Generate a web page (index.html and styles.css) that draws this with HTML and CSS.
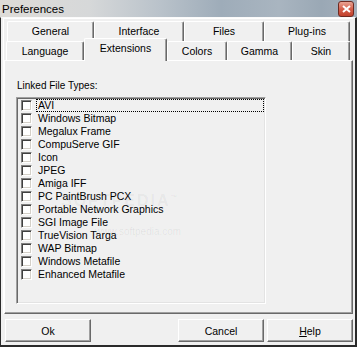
FILE: index.html
```html
<!DOCTYPE html>
<html lang="en">
  <head>
    <meta charset="UTF-8" />
    <title>Preferences</title>
    <link rel="stylesheet" href="styles.css">
  </head>
  <body>
    <div class="window">
      <div class="titlebar">
        <span class="title">Preferences</span>
        <div class="close-btn">
          <svg width="9" height="8" viewBox="0 0 9 8">
            <path d="M1 1 L8 7 M8 1 L1 7" stroke="#fff" stroke-width="2" />
          </svg>
        </div>
      </div>

      <div class="frame">
        <div class="sheet">
          <div class="tab-row back">
            <div class="tab" style="width: 87px">General</div>
            <div class="tab" style="width: 90px">Interface</div>
            <div class="tab" style="width: 80px">Files</div>
            <div class="tab" style="width: 86px">Plug-ins</div>
          </div>
          <div class="tab-row front">
            <div class="tab" style="width: 78px">Language</div>
            <div class="tab selected" style="width: 83px">Extensions</div>
            <div class="tab" style="width: 60px">Colors</div>
            <div class="tab" style="width: 65px">Gamma</div>
            <div class="tab" style="width: 58px">Skin</div>
          </div>

          <div class="panel">
            <div class="label">Linked File Types:</div>
            <div class="list">
              <div class="item focus"><span class="check"></span><span class="text">AVI</span></div>
              <div class="item"><span class="check"></span><span class="text">Windows Bitmap</span></div>
              <div class="item"><span class="check"></span><span class="text">Megalux Frame</span></div>
              <div class="item"><span class="check"></span><span class="text">CompuServe GIF</span></div>
              <div class="item"><span class="check"></span><span class="text">Icon</span></div>
              <div class="item"><span class="check"></span><span class="text">JPEG</span></div>
              <div class="item"><span class="check"></span><span class="text">Amiga IFF</span></div>
              <div class="item"><span class="check"></span><span class="text">PC PaintBrush PCX</span></div>
              <div class="item"><span class="check"></span><span class="text">Portable Network Graphics</span></div>
              <div class="item"><span class="check"></span><span class="text">SGI Image File</span></div>
              <div class="item"><span class="check"></span><span class="text">TrueVision Targa</span></div>
              <div class="item"><span class="check"></span><span class="text">WAP Bitmap</span></div>
              <div class="item"><span class="check"></span><span class="text">Windows Metafile</span></div>
              <div class="item"><span class="check"></span><span class="text">Enhanced Metafile</span></div>
            </div>
            <div class="watermark">SOFTPEDIA<sup>™</sup></div>
            <div class="watermark-url">www.softpedia.com</div>
          </div>
        </div>

        <div class="buttons">
          <button class="btn">Ok</button>
          <button class="btn cancel">Cancel</button>
          <button class="btn"><u>H</u>elp</button>
        </div>
      </div>
    </div>
  </body>
</html>
```

FILE: styles.css
```css
* {
  margin: 0;
  padding: 0;
  box-sizing: border-box;
  font-family: "Liberation Sans", Arial, sans-serif;
}
body {
  background-color: #f0f0f0;
  width: 357px;
  height: 347px;
  overflow: hidden;
}
.window {
  width: 357px;
  height: 347px;
  display: flex;
  flex-direction: column;
}
.titlebar {
  height: 17px;
  display: flex;
  align-items: center;
  justify-content: space-between;
  padding: 0 3px 0 2px;
  background: linear-gradient(90deg, #dedcd8 0%, #d6d8d9 25%, #b9c2ca 45%, #9eacb9 62%, #a9b5c0 78%, #9aa8b5 90%, #a4b0bc 100%);
}
.title {
  font-size: 11.5px;
  color: #000;
  padding-top: 1px;
}
.close-btn {
  width: 16px;
  height: 16px;
  margin-top: 1px;
  border: 1px solid #6e2a22;
  border-radius: 3px;
  background: linear-gradient(#e9a494, #d5604c 50%, #c2412c);
  display: flex;
  align-items: center;
  justify-content: center;
}
.frame {
  flex: 1;
  background-color: #f0f0f0;
  border-left: 1px solid #2a2a2a;
  border-right: 2px solid #2a2a2a;
  border-bottom: 2px solid #2a2a2a;
  border-top: 1px solid #fafafa;
  display: flex;
  flex-direction: column;
}
.sheet {
  margin: 0 2px 0 2px;
  border-left: 1px solid #fff;
  border-top: 1px solid #fff;
  padding-top: 2px;
  display: flex;
  flex-direction: column;
}
.tab-row {
  display: flex;
  height: 20px;
}
.tab-row.back {
  margin-left: 3px;
}
.tab-row.front {
  margin-left: 2px;
  height: 19px;
}
.tab {
  height: 20px;
  font-size: 10.5px;
  line-height: 19px;
  text-align: center;
  color: #000;
  background-color: #f0f0f0;
  border-top: 1px solid #fff;
  border-left: 1px solid #fff;
  border-right: 1px solid #696969;
  box-shadow: inset -1px 0 #a0a0a0;
  border-radius: 2px 2px 0 0;
}
.front .tab {
  height: 19px;
  line-height: 18px;
}
.front .tab.selected {
  height: 23px;
  margin-top: -3px;
  line-height: 19px;
  position: relative;
  z-index: 1;
}
.panel {
  height: 254px;
  position: relative;
  border-top: 1px solid #fff;
  border-left: 1px solid #fff;
  border-right: 1px solid #696969;
  border-bottom: 1px solid #696969;
  box-shadow: inset -1px -1px #a0a0a0;
  padding: 19px 0 0 11px;
}
.label {
  font-size: 10px;
  line-height: 12px;
  color: #000;
  margin-bottom: 5px;
  padding-left: 1px;
}
.list {
  width: 250px;
  height: 207px;
  border-top: 1px solid #a0a0a0;
  border-left: 1px solid #a0a0a0;
  border-right: 1px solid #fff;
  border-bottom: 1px solid #fff;
  box-shadow: inset 1px 1px #696969, inset -1px -1px #e3e3e3;
  padding: 1px 1px 0 1px;
}
.item {
  height: 13px;
  display: flex;
  align-items: center;
  padding-left: 3px;
}
.check {
  width: 11px;
  height: 11px;
  background-color: #fff;
  border-top: 1px solid #808080;
  border-left: 1px solid #808080;
  border-right: 1px solid #fff;
  border-bottom: 1px solid #fff;
  box-shadow: inset 1px 1px #404040, inset -1px -1px #d4d0c8;
  margin-right: 4px;
}
.text {
  flex: 1;
  height: 13px;
  font-size: 10.5px;
  line-height: 11px;
  color: #000;
  padding-left: 1px;
  border: 1px solid transparent;
}
.item.focus .text {
  border: 1px dotted #000;
}
.watermark {
  position: absolute;
  left: 56px;
  top: 131px;
  font-size: 16px;
  font-weight: bold;
  letter-spacing: 2px;
  color: rgba(0, 0, 0, 0.05);
}
.watermark sup {
  font-size: 7px;
}
.watermark-url {
  position: absolute;
  left: 90px;
  top: 165px;
  font-size: 10px;
  color: rgba(0, 0, 0, 0.07);
}
.buttons {
  display: flex;
  margin-top: 5px;
  padding: 0 2px 0 4px;
  gap: 3px;
}
.btn {
  width: 86px;
  height: 23px;
  font-size: 10.5px;
  color: #000;
  background-color: #f0f0f0;
  border-top: 1px solid #fff;
  border-left: 1px solid #fff;
  border-right: 1px solid #696969;
  border-bottom: 1px solid #696969;
  box-shadow: inset -1px -1px #a0a0a0;
}
.btn.cancel {
  margin-left: auto;
}
```
